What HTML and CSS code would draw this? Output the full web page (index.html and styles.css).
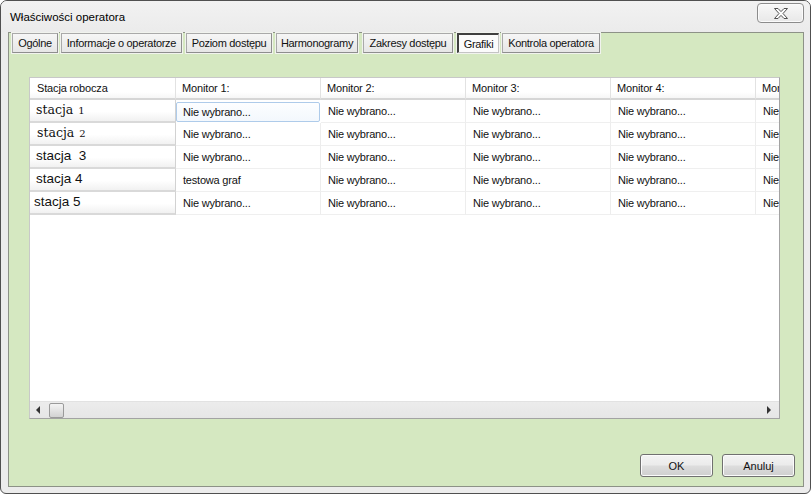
FILE: index.html
```html
<!DOCTYPE html>
<html lang="pl">
<head>
<meta charset="utf-8">
<title>Właściwości operatora</title>
<link rel="stylesheet" href="styles.css">
</head>
<body>
<div class="window">
  <div class="titlebar">
    <span class="title">Właściwości operatora</span>
    <div class="close">
      <svg width="14" height="11" viewBox="0 0 14 11"><polygon points="0.5,0.5 4,0.5 7,3.6 10,0.5 13.5,0.5 9,5.5 13.5,10.5 10,10.5 7,7.4 4,10.5 0.5,10.5 5,5.5" fill="#fdfdfd" stroke="#505050" stroke-width="1"/></svg>
    </div>
  </div>
  <div class="panel">
    <div class="tabs">
      <div class="tab t1">Ogólne</div>
      <div class="tab t2">Informacje o operatorze</div>
      <div class="tab t3">Poziom dostępu</div>
      <div class="tab t4">Harmonogramy</div>
      <div class="tab t5">Zakresy dostępu</div>
      <div class="tab t6 active">Grafiki</div>
      <div class="tab t7">Kontrola operatora</div>
    </div>
    <div class="page">
      <div class="datagrid">
        <div class="gridbody">
          <div class="grow head">
            <div class="hc first">Stacja robocza</div>
            <div class="hc">Monitor 1:</div>
            <div class="hc">Monitor 2:</div>
            <div class="hc">Monitor 3:</div>
            <div class="hc">Monitor 4:</div>
            <div class="hc">Monitor 5:</div>
          </div>
          <div class="grow">
            <div class="rh serif">stacja<span class="os">1</span></div>
            <div class="c sel">Nie wybrano...</div>
            <div class="c">Nie wybrano...</div>
            <div class="c">Nie wybrano...</div>
            <div class="c">Nie wybrano...</div>
            <div class="c">Nie wybrano...</div>
          </div>
          <div class="grow">
            <div class="rh serif r2">stacja<span class="os">2</span></div>
            <div class="c">Nie wybrano...</div>
            <div class="c">Nie wybrano...</div>
            <div class="c">Nie wybrano...</div>
            <div class="c">Nie wybrano...</div>
            <div class="c">Nie wybrano...</div>
          </div>
          <div class="grow">
            <div class="rh sans r3">stacja&nbsp; 3</div>
            <div class="c">Nie wybrano...</div>
            <div class="c">Nie wybrano...</div>
            <div class="c">Nie wybrano...</div>
            <div class="c">Nie wybrano...</div>
            <div class="c">Nie wybrano...</div>
          </div>
          <div class="grow">
            <div class="rh sans r4">stacja 4</div>
            <div class="c">testowa graf</div>
            <div class="c">Nie wybrano...</div>
            <div class="c">Nie wybrano...</div>
            <div class="c">Nie wybrano...</div>
            <div class="c">Nie wybrano...</div>
          </div>
          <div class="grow">
            <div class="rh sans r5">stacja 5</div>
            <div class="c">Nie wybrano...</div>
            <div class="c">Nie wybrano...</div>
            <div class="c">Nie wybrano...</div>
            <div class="c">Nie wybrano...</div>
            <div class="c">Nie wybrano...</div>
          </div>
        </div>
        <div class="hscroll">
          <span class="arrow left"></span>
          <span class="thumb"></span>
          <span class="track"></span>
          <span class="arrow right"></span>
        </div>
      </div>
      <div class="buttons">
        <button class="btn">OK</button>
        <button class="btn">Anuluj</button>
      </div>
    </div>
  </div>
</div>
</body>
</html>
```
FILE: styles.css
```css
* { box-sizing: border-box; }
html, body { margin: 0; padding: 0; }
body {
  width: 811px;
  height: 494px;
  overflow: hidden;
  background: #ffffff;
  font-family: "Liberation Sans", Arial, sans-serif;
  font-size: 11px;
  color: #000;
}

.window {
  width: 811px;
  height: 494px;
  border: 1px solid #505050;
  border-radius: 7px 7px 6px 6px;
  background: #ececec;
  display: flex;
  flex-direction: column;
  overflow: hidden;
}

.titlebar {
  height: 31px;
  flex: none;
  display: flex;
  justify-content: space-between;
  align-items: flex-start;
  padding: 0 6px 0 9px;
  background: linear-gradient(#f2f2f2, #ebebeb);
}
.title {
  font-size: 11.5px;
  margin-top: 10px;
  color: #000;
}
.close {
  width: 47px;
  height: 20px;
  margin-top: 2px;
  border: 1px solid #8c8c8c;
  border-radius: 4px;
  background: linear-gradient(#f8f8f8, #e8e8e8);
  display: flex;
  align-items: center;
  justify-content: center;
  box-shadow: inset 0 0 0 1px #fbfbfb;
}
.close svg { display: block; }

.panel {
  flex: 1;
  margin: 0 6px 6px 7px;
  background: #d5e8c1;
  border: 1px solid #8d9287;
  display: flex;
  flex-direction: column;
}

.tabs {
  display: flex;
  height: 20px;
  flex: none;
  padding-left: 3px;
}
.tab {
  flex: none;
  height: 20px;
  border: 1px solid #8e8e8e;
  border-top-color: #a9a9a9;
  border-left-color: #a9a9a9;
  background: linear-gradient(#f6f6f6, #e6e6e6);
  box-shadow: 0 0 0 1px #f1f3ee;
  display: flex;
  align-items: center;
  justify-content: center;
  font-size: 11px;
  letter-spacing: -0.3px;
  white-space: nowrap;
  overflow: hidden;
  color: #111;
}
.t1 { width: 46px; }
.t2 { width: 121px; margin-left: 3px; }
.t3 { width: 86px; margin-left: 4px; }
.t4 { width: 82px; margin-left: 4px; }
.t5 { width: 90px; margin-left: 5px; }
.t6 { width: 42px; margin-left: 4px; }
.t7 { width: 98px; margin-left: 3px; }
.tab.active {
  background: #fbfbfb;
  border-color: #3f3f3f #c4c4c4 #c4c4c4 #3f3f3f;
  border-width: 2px 1px 1px 2px;
}

.page {
  flex: 1;
  display: flex;
  flex-direction: column;
  padding: 24px 8px 9px 20px;
}

.datagrid {
  width: 751px;
  height: 342px;
  flex: none;
  border: 1px solid #a3a3a3;
  border-top-color: #c8c8c8;
  border-left-color: #c8c8c8;
  background: #ffffff;
  display: flex;
  flex-direction: column;
  overflow: hidden;
}
.gridbody {
  flex: 1;
  overflow: hidden;
}
.grow {
  display: grid;
  grid-template-columns: 146px repeat(5, 145px);
  height: 23px;
}
.grow.head { height: 22px; }

.hc {
  border-right: 1px solid #e2e2e2;
  border-bottom: 2px solid #d6d6d6;
  background: linear-gradient(#ffffff 70%, #f6f6f6);
  padding-left: 6px;
  display: flex;
  align-items: center;
  white-space: nowrap;
  overflow: hidden;
  letter-spacing: -0.15px;
  color: #111;
}
.hc.first { padding-left: 7px; }

.rh {
  border-right: 1px solid #d2d2d2;
  border-bottom: 2px solid #d9d9d9;
  background: linear-gradient(#ffffff 55%, #f1f1f1);
  display: flex;
  align-items: center;
  white-space: nowrap;
  color: #111;
  padding-bottom: 3px;
}
.rh.serif {
  font-family: "DejaVu Serif", "Liberation Serif", serif;
  font-size: 12.5px;
  padding-left: 6px;
}
.rh.r2 { padding-left: 7px; }
.os { font-size: 10px; position: relative; top: 1px; margin-left: 5px; }
.rh.sans {
  font-family: "Liberation Sans", Arial, sans-serif;
  font-size: 13.5px;
  padding-left: 6px;
}
.rh.r5 { padding-left: 4px; }

.c {
  border-right: 1px solid #ededed;
  border-bottom: 1px solid #efefef;
  padding-left: 7px;
  display: flex;
  align-items: center;
  white-space: nowrap;
  overflow: hidden;
  letter-spacing: -0.2px;
  color: #111;
}
.c.sel {
  border: 1px solid #aecbea;
  border-radius: 2px;
  margin: 2px 1px 1px 0;
  padding-left: 6px;
  background: linear-gradient(#fdfeff, #f3f8fd);
}

.hscroll {
  height: 17px;
  flex: none;
  display: flex;
  align-items: center;
  background: linear-gradient(#ececec, #e6e6e6);
  border-top: 1px solid #e2e2e2;
}
.arrow {
  width: 0;
  height: 0;
  border-top: 4px solid transparent;
  border-bottom: 4px solid transparent;
}
.arrow.left {
  border-right: 4px solid #333;
  margin-left: 6px;
}
.arrow.right {
  border-left: 4px solid #333;
  margin-right: 8px;
}
.thumb {
  width: 15px;
  height: 15px;
  margin-left: 9px;
  border: 1px solid #9a9a9a;
  border-radius: 2px;
  background: linear-gradient(#f4f4f4, #d2d2d2);
}
.track { flex: 1; }

.buttons {
  margin-top: auto;
  display: flex;
  justify-content: flex-end;
  gap: 9px;
}
.btn {
  width: 73px;
  height: 23px;
  border: 1px solid #707070;
  border-radius: 3px;
  background: linear-gradient(#f3f3f3 0%, #ebebeb 48%, #dddddd 52%, #cfcfcf 100%);
  box-shadow: inset 0 0 0 1px #fbfbfb;
  font-family: "Liberation Sans", Arial, sans-serif;
  font-size: 11px;
  color: #111;
  padding: 0;
}
```
